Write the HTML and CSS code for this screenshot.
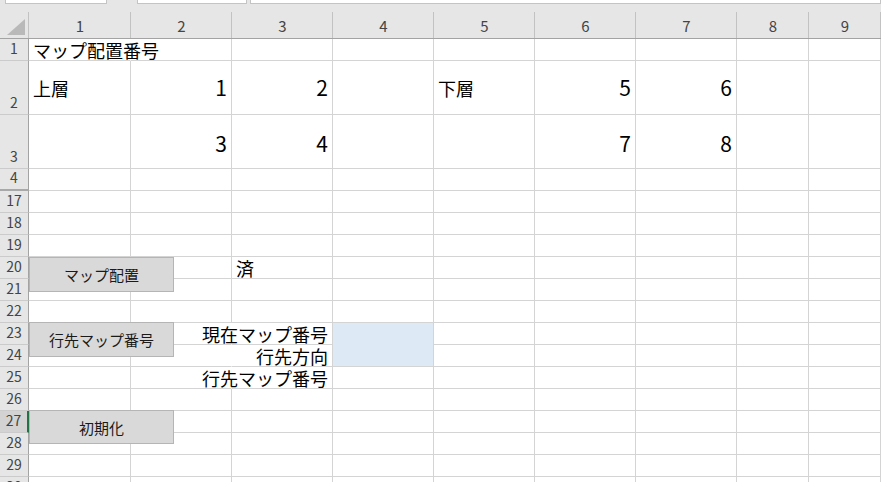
FILE: index.html
```html
<!DOCTYPE html>
<html lang="ja">
<head>
<meta charset="utf-8">
<title>Sheet</title>
<link rel="stylesheet" href="styles.css">
</head>
<body>
<div class="topbar">
  <div class="box box1"></div>
  <div class="box box2"></div>
  <div class="box box3"></div>
</div>
<div class="sheet">
  <div class="hd corner"><svg width="29" height="35" viewBox="0 0 29 35"><polygon points="25,15 25,31 7,31" fill="#b9b9b9"/></svg></div>
  <div class="hd">1</div><div class="hd">2</div><div class="hd">3</div><div class="hd">4</div><div class="hd">5</div><div class="hd">6</div><div class="hd">7</div><div class="hd">8</div><div class="hd">9</div>

  <div class="rh">1</div>
  <div class="c l nr"><span>マップ配置番号</span></div><div class="c"></div><div class="c"></div><div class="c"></div><div class="c"></div><div class="c"></div><div class="c"></div><div class="c"></div><div class="c"></div>

  <div class="rh">2</div>
  <div class="c l mid"><span>上層</span></div>
  <div class="c r mid"><span class="num">1</span></div>
  <div class="c r mid"><span class="num">2</span></div>
  <div class="c"></div>
  <div class="c l mid"><span>下層</span></div>
  <div class="c r mid"><span class="num">5</span></div>
  <div class="c r mid"><span class="num">6</span></div>
  <div class="c"></div><div class="c"></div>

  <div class="rh">3</div>
  <div class="c"></div>
  <div class="c r mid low"><span class="num">3</span></div>
  <div class="c r mid low"><span class="num">4</span></div>
  <div class="c"></div><div class="c"></div>
  <div class="c r mid low"><span class="num">7</span></div>
  <div class="c r mid low"><span class="num">8</span></div>
  <div class="c"></div><div class="c"></div>

  <div class="rh hid">4</div>
  <div class="c"></div><div class="c"></div><div class="c"></div><div class="c"></div><div class="c"></div><div class="c"></div><div class="c"></div><div class="c"></div><div class="c"></div>

  <div class="rh">17</div>
  <div class="c"></div><div class="c"></div><div class="c"></div><div class="c"></div><div class="c"></div><div class="c"></div><div class="c"></div><div class="c"></div><div class="c"></div>

  <div class="rh">18</div>
  <div class="c"></div><div class="c"></div><div class="c"></div><div class="c"></div><div class="c"></div><div class="c"></div><div class="c"></div><div class="c"></div><div class="c"></div>

  <div class="rh">19</div>
  <div class="c"></div><div class="c"></div><div class="c"></div><div class="c"></div><div class="c"></div><div class="c"></div><div class="c"></div><div class="c"></div><div class="c"></div>

  <div class="rh">20</div>
  <div class="c"></div><div class="c"></div><div class="c l"><span>済</span></div><div class="c"></div><div class="c"></div><div class="c"></div><div class="c"></div><div class="c"></div><div class="c"></div>

  <div class="rh">21</div>
  <div class="c"></div><div class="c"></div><div class="c"></div><div class="c"></div><div class="c"></div><div class="c"></div><div class="c"></div><div class="c"></div><div class="c"></div>

  <div class="rh">22</div>
  <div class="c"></div><div class="c"></div><div class="c"></div><div class="c"></div><div class="c"></div><div class="c"></div><div class="c"></div><div class="c"></div><div class="c"></div>

  <div class="rh">23</div>
  <div class="c"></div><div class="c nr"></div><div class="c r"><span>現在マップ番号</span></div><div class="c blue"></div><div class="c"></div><div class="c"></div><div class="c"></div><div class="c"></div><div class="c"></div>

  <div class="rh">24</div>
  <div class="c"></div><div class="c nr"></div><div class="c r"><span>行先方向</span></div><div class="c"></div><div class="c"></div><div class="c"></div><div class="c"></div><div class="c"></div>

  <div class="rh">25</div>
  <div class="c"></div><div class="c nr"></div><div class="c r"><span>行先マップ番号</span></div><div class="c"></div><div class="c"></div><div class="c"></div><div class="c"></div><div class="c"></div><div class="c"></div>

  <div class="rh">26</div>
  <div class="c"></div><div class="c"></div><div class="c"></div><div class="c"></div><div class="c"></div><div class="c"></div><div class="c"></div><div class="c"></div><div class="c"></div>

  <div class="rh sel">27</div>
  <div class="c"></div><div class="c"></div><div class="c"></div><div class="c"></div><div class="c"></div><div class="c"></div><div class="c"></div><div class="c"></div><div class="c"></div>

  <div class="rh">28</div>
  <div class="c"></div><div class="c"></div><div class="c"></div><div class="c"></div><div class="c"></div><div class="c"></div><div class="c"></div><div class="c"></div><div class="c"></div>

  <div class="rh">29</div>
  <div class="c"></div><div class="c"></div><div class="c"></div><div class="c"></div><div class="c"></div><div class="c"></div><div class="c"></div><div class="c"></div><div class="c"></div>

  <div class="rh">30</div>
  <div class="c"></div><div class="c"></div><div class="c"></div><div class="c"></div><div class="c"></div><div class="c"></div><div class="c"></div><div class="c"></div><div class="c"></div>

  <div class="btn b1">マップ配置</div>
  <div class="btn b2">行先マップ番号</div>
  <div class="btn b3">初期化</div>
</div>
</body>
</html>
```
FILE: styles.css
```css
html, body {
  margin: 0;
  padding: 0;
}
body {
  width: 881px;
  height: 482px;
  overflow: hidden;
  background: #ffffff;
  font-family: "Noto Sans CJK JP", "Noto Sans", sans-serif;
  color: #000;
}
.topbar {
  display: flex;
  height: 4px;
  background: #e6e6e6;
}
.box {
  height: 4px;
  box-sizing: border-box;
  background: #ffffff;
  border: 1px solid #c4c4c4;
  border-top: 0;
}
.box1 { margin-left: 5px; width: 102px; }
.box2 { margin-left: 30px; width: 110px; }
.box3 { margin-left: 3px; width: 631px; }

.sheet {
  position: relative;
  display: grid;
  grid-template-columns: 29px 102px repeat(6, 101px) 72px 72px;
  grid-template-rows: 35px 22px 54px 54px repeat(15, 22px);
}
.hd {
  box-sizing: border-box;
  display: flex;
  justify-content: center;
  align-items: flex-end;
  padding-bottom: 5px;
  font-size: 15px;
  line-height: 15px;
  color: #444;
  background-color: #e6e6e6;
  background-image: linear-gradient(#c2c2c2, #c2c2c2);
  background-repeat: no-repeat;
  background-position: right bottom;
  background-size: 1px 26px;
  border-bottom: 1px solid #a3a3a3;
}
.corner {
  padding: 0;
  display: block;
}
.corner svg { display: block; }
.rh {
  box-sizing: border-box;
  display: flex;
  justify-content: center;
  align-items: flex-end;
  padding-bottom: 5px;
  font-size: 14px;
  line-height: 14px;
  color: #444;
  background: #e6e6e6;
  border-right: 1px solid #a3a3a3;
  border-bottom: 1px solid #cbcbcb;
}
.rh.hid { border-bottom: 2px solid #a8a8a8; }
.rh.sel {
  background: #d3d3d3;
  border-right: 2px solid #217346;
}
.c {
  box-sizing: border-box;
  display: flex;
  align-items: flex-end;
  min-width: 0;
  white-space: nowrap;
  font-size: 18px;
  line-height: 18px;
  padding-bottom: 1px;
  border-right: 1px solid #d4d4d4;
  border-bottom: 1px solid #d4d4d4;
}
.l { justify-content: flex-start; padding-left: 4px; }
.r { justify-content: flex-end; padding-right: 4px; }
.mid { align-items: center; padding-bottom: 0; }
.low { padding-top: 4px; }
.num { font-size: 21px; line-height: 21px; }
.nr { border-right-color: transparent; }
.blue {
  grid-row: span 2;
  background: #dde9f5;
}
.btn {
  position: absolute;
  left: 29px;
  width: 145px;
  height: 35px;
  box-sizing: border-box;
  display: flex;
  align-items: center;
  justify-content: center;
  background: #d9d9d9;
  border: 1px solid #b5b5b5;
  font-size: 15px;
  line-height: 15px;
  color: #1a1a1a;
}
.b1 { top: 253px; }
.b2 { top: 318px; }
.b3 { top: 406px; height: 34px; }
```
